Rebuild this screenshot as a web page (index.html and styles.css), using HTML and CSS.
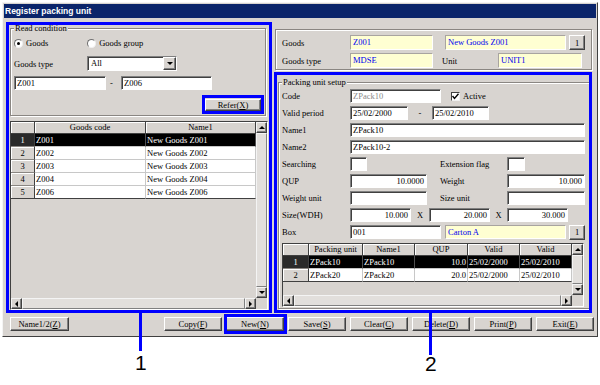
FILE: index.html
```html
<!DOCTYPE html>
<html lang="en">
<head>
    <meta charset="UTF-8">
    <meta name="viewport" content="width=device-width, initial-scale=1.0">
    <title>Register packing unit</title>
    <link rel="stylesheet" href="styles.css">
</head>
<body>
<div class="screen">
    <div class="window">
        <div class="titlebar">Register packing unit</div>

        <div class="main">
            <div class="col-left">
                <fieldset class="group read-cond">
                    <legend>Read condition</legend>
                    <div class="radio-row">
                        <label class="radio"><span class="radio-dot checked"></span>Goods</label>
                        <label class="radio radio-2"><span class="radio-dot"></span>Goods group</label>
                    </div>
                    <div class="type-row">
                        <span class="lbl lbl-type">Goods type</span>
                        <div class="select">
                            <span class="select-text">All</span>
                            <span class="drop"><i class="tri tri-down"></i></span>
                        </div>
                    </div>
                    <div class="range-row">
                        <div class="field w92">Z001</div>
                        <span class="dash">-</span>
                        <div class="field w91">Z006</div>
                    </div>
                    <div class="refer-row">
                        <button class="btn btn-refer">Refer(<u>X</u>)</button>
                    </div>
                </fieldset>

                <div class="grid goods-grid">
                    <div class="grid-body">
                        <div class="grid-table">
                            <div class="gh"></div><div class="gh">Goods code</div><div class="gh">Name1</div>
                            <div class="rh sel">1</div><div class="gc sel">Z001</div><div class="gc sel">New Goods Z001</div>
                            <div class="rh">2</div><div class="gc">Z002</div><div class="gc">New Goods Z002</div>
                            <div class="rh">3</div><div class="gc">Z003</div><div class="gc">New Goods Z003</div>
                            <div class="rh">4</div><div class="gc">Z004</div><div class="gc">New Goods Z004</div>
                            <div class="rh last">5</div><div class="gc last">Z006</div><div class="gc last">New Goods Z006</div>
                        </div>
                        <div class="vscroll">
                            <div class="sbtn"><i class="tri tri-up"></i></div>
                            <div class="thumb"></div>
                            <div class="sbtn"><i class="tri tri-down"></i></div>
                        </div>
                    </div>
                    <div class="hscroll">
                        <div class="sbtn"><i class="tri tri-left"></i></div>
                        <div class="thumb"></div>
                        <div class="sbtn"><i class="tri tri-right"></i></div>
                        <div class="scorner"></div>
                    </div>
                </div>
            </div>

            <div class="col-right">
                <fieldset class="group goods-group">
                    <div class="row">
                        <span class="lbl">Goods</span>
                        <div class="field yellow w83">Z001</div>
                        <div class="field yellow w121 ml12">New Goods Z001</div>
                        <button class="btn btn-small ml3">1</button>
                    </div>
                    <div class="row">
                        <span class="lbl">Goods type</span>
                        <div class="field yellow w83">MDSE</div>
                        <span class="lbl lbl-unit">Unit</span>
                        <div class="field yellow w84">UNIT1</div>
                    </div>
                </fieldset>

                <fieldset class="group packing">
                    <legend>Packing unit setup</legend>
                    <div class="rows">
                        <div class="row">
                            <span class="lbl">Code</span>
                            <div class="field w91 muted">ZPack10</div>
                            <span class="check">
                                <svg width="7" height="7" viewBox="0 0 7 7"><polyline points="0.5,3 2.5,5.5 6.5,0.8" fill="none" stroke="#000" stroke-width="1.4"/></svg>
                            </span>
                            <span class="check-text">Active</span>
                        </div>
                        <div class="row">
                            <span class="lbl">Valid period</span>
                            <div class="field w58">25/02/2000</div>
                            <span class="sep w24">-</span>
                            <div class="field w57">25/02/2010</div>
                        </div>
                        <div class="row">
                            <span class="lbl">Name1</span>
                            <div class="field w235">ZPack10</div>
                        </div>
                        <div class="row">
                            <span class="lbl">Name2</span>
                            <div class="field w235">ZPack10-2</div>
                        </div>
                        <div class="row">
                            <span class="lbl">Searching</span>
                            <div class="field w17"></div>
                            <span class="lbl lbl-2 ml73">Extension flag</span>
                            <div class="field w18"></div>
                        </div>
                        <div class="row">
                            <span class="lbl">QUP</span>
                            <div class="field num w77">10.0000</div>
                            <span class="lbl lbl-2 ml13">Weight</span>
                            <div class="field num w78">10.000</div>
                        </div>
                        <div class="row">
                            <span class="lbl">Weight unit</span>
                            <div class="field w77"></div>
                            <span class="lbl lbl-2 ml13">Size unit</span>
                            <div class="field w78"></div>
                        </div>
                        <div class="row">
                            <span class="lbl">Size(WDH)</span>
                            <div class="field num w61">10.000</div>
                            <span class="sep w18">X</span>
                            <div class="field num w61">20.000</div>
                            <span class="sep w17">X</span>
                            <div class="field num w61">30.000</div>
                        </div>
                        <div class="row">
                            <span class="lbl">Box</span>
                            <div class="field w91">001</div>
                            <div class="field yellow w121 ml4">Carton A</div>
                            <button class="btn btn-small ml3">1</button>
                        </div>
                    </div>

                    <div class="grid pack-grid">
                        <div class="grid-body">
                            <div class="grid-table">
                                <div class="gh"></div><div class="gh">Packing unit</div><div class="gh">Name1</div><div class="gh">QUP</div><div class="gh">Valid</div><div class="gh">Valid</div>
                                <div class="rh sel">1</div><div class="gc sel">ZPack10</div><div class="gc sel">ZPack10</div><div class="gc sel num">10.0</div><div class="gc sel">25/02/2000</div><div class="gc sel">25/02/2010</div>
                                <div class="rh last">2</div><div class="gc last">ZPack20</div><div class="gc last">ZPack20</div><div class="gc last num">20.0</div><div class="gc last">25/02/2000</div><div class="gc last">25/02/2010</div>
                            </div>
                            <div class="vscroll">
                                <div class="sbtn"><i class="tri tri-up"></i></div>
                                <div class="thumb"></div>
                                <div class="sbtn"><i class="tri tri-down"></i></div>
                            </div>
                        </div>
                        <div class="hscroll">
                            <div class="sbtn"><i class="tri tri-left"></i></div>
                            <div class="thumb"></div>
                            <div class="sbtn"><i class="tri tri-right"></i></div>
                            <div class="scorner"></div>
                        </div>
                    </div>
                </fieldset>
            </div>
        </div>

        <div class="footer">
            <button class="btn btn-foot btn-name">Name1/2(<u>Z</u>)</button>
            <div class="foot-actions">
                <button class="btn btn-foot">Copy(<u>F</u>)</button>
                <button class="btn btn-foot">New(<u>N</u>)</button>
                <button class="btn btn-foot">Save(<u>S</u>)</button>
                <button class="btn btn-foot">Clear(<u>C</u>)</button>
                <button class="btn btn-foot">Delete(<u>D</u>)</button>
                <button class="btn btn-foot">Print(<u>P</u>)</button>
                <button class="btn btn-foot">Exit(<u>E</u>)</button>
            </div>
        </div>
    </div>

    <!-- callout marks drawn over the dialog -->
    <div class="mark mark-left"></div>
    <div class="mark mark-right"></div>
    <div class="mark mark-refer"></div>
    <div class="mark mark-new"></div>
    <div class="leader leader-1"></div>
    <div class="leader leader-2"></div>
    <div class="callout callout-1">1</div>
    <div class="callout callout-2">2</div>
</div>
</body>
</html>
```

FILE: styles.css
```css
* {
    box-sizing: border-box;
}

body {
    margin: 0;
    background: #fff;
    font-family: "Liberation Serif", serif;
    font-size: 8.5px;
    color: #000;
}

.screen {
    position: relative;
    width: 600px;
    height: 385px;
    overflow: hidden;
}

.window {
    margin: 2px 0 0 2px;
    width: 596px;
    height: 335px;
    padding: 1px;
    border: 1px solid;
    border-color: #f4f4f4 #404040 #404040 #f4f4f4;
    background: #d8d4d0;
    display: flex;
    flex-direction: column;
}

.titlebar {
    flex: none;
    height: 14px;
    padding-left: 1px;
    background: #0a246a;
    color: #fff;
    font: bold 8.5px "Liberation Sans", sans-serif;
    line-height: 14px;
}

.main {
    flex: none;
    height: 294px;
    display: flex;
    gap: 7px;
    padding: 5px 4px 0 6px;
}

.col-left {
    width: 258px;
    display: flex;
    flex-direction: column;
}

.col-right {
    width: 317px;
    display: flex;
    flex-direction: column;
}

/* group boxes */
.group {
    margin: 0;
    min-width: 0;
    padding: 0 3px;
    border: 1px solid #8a8682;
    box-shadow: inset 1px 1px 0 #fff, 1px 1px 0 #fff;
}

.group legend {
    padding: 0 1px;
    line-height: 10px;
    background: #d8d4d0;
}

.read-cond {
    width: 256px;
    padding: 4px 3px 4px;
}

.goods-group {
    margin-top: 6px;
    padding: 5px 6px 1px;
    display: flex;
    flex-direction: column;
    gap: 3px;
}

.goods-group .row {
    height: 15px;
}

.packing {
    margin: 7px 0 0 3px;
    width: 312px;
    padding: 2px 3px 1px;
}

.rows {
    display: flex;
    flex-direction: column;
    gap: 3px;
}

.row {
    display: flex;
    align-items: center;
    height: 14px;
}

.lbl {
    width: 68px;
    flex: none;
    white-space: nowrap;
}

.lbl-2 {
    width: 67px;
}

.lbl-unit {
    width: 56px;
    margin-left: 9px;
}

.lbl-type {
    width: 73px;
}

/* read condition */
.radio-row {
    height: 12px;
    display: flex;
    align-items: center;
}

.radio {
    display: flex;
    align-items: center;
    gap: 3px;
}

.radio-2 {
    margin-left: 39px;
}

.radio-dot {
    position: relative;
    width: 9px;
    height: 9px;
    border-radius: 50%;
    background: #fff;
    border: 1px solid;
    border-color: #707070 #f0f0f0 #f0f0f0 #707070;
}

.radio-dot.checked::after {
    content: "";
    position: absolute;
    left: 2px;
    top: 2px;
    width: 3px;
    height: 3px;
    border-radius: 50%;
    background: #000;
}

.type-row {
    margin-top: 7px;
    height: 15px;
    display: flex;
    align-items: center;
}

.select {
    width: 90px;
    height: 15px;
    display: flex;
    background: #fff;
    border: 1px solid;
    border-color: #808080 #fff #fff #808080;
    box-shadow: inset 1px 1px 0 #404040;
}

.select-text {
    flex: 1;
    padding: 1px 0 0 3px;
    line-height: 11px;
}

.drop {
    width: 13px;
    display: flex;
    align-items: center;
    justify-content: center;
    background: #d8d4d0;
    border: 1px solid;
    border-color: #fff #404040 #404040 #fff;
    box-shadow: inset -1px -1px 0 #808080;
}

.range-row {
    margin-top: 5px;
    height: 14px;
    display: flex;
    align-items: center;
}

.dash {
    width: 15px;
    padding-left: 4px;
}

.refer-row {
    margin-top: 9px;
    display: flex;
    justify-content: flex-end;
    padding-right: 1px;
}

/* inputs */
.field {
    flex: none;
    height: 14px;
    padding: 0 2px;
    background: #fff;
    border: 1px solid;
    border-color: #808080 #fff #fff #808080;
    box-shadow: inset 1px 1px 0 #404040;
    line-height: 12px;
    white-space: nowrap;
    overflow: hidden;
}

.goods-group .field {
    height: 15px;
    line-height: 13px;
}

.field.yellow {
    background: #ffffd2;
    color: #0000f0;
    border-color: #a8a4a0 #fff #fff #a8a4a0;
    box-shadow: none;
}

.field.muted {
    color: #8a8a8a;
}

.num {
    text-align: right;
}

.sep {
    flex: none;
    text-align: center;
}

.check {
    margin-left: 10px;
    width: 9px;
    height: 9px;
    display: flex;
    align-items: center;
    justify-content: center;
    background: #fff;
    border: 1px solid;
    border-color: #404040 #f0f0f0 #f0f0f0 #404040;
}

.check-text {
    margin-left: 3px;
}

.w17 { width: 17px; }
.w18 { width: 18px; }
.w24 { width: 24px; }
.w57 { width: 57px; }
.w58 { width: 58px; }
.w61 { width: 61px; }
.w77 { width: 77px; }
.w78 { width: 78px; }
.w83 { width: 83px; }
.w84 { width: 84px; }
.w91 { width: 91px; }
.w92 { width: 92px; }
.w121 { width: 121px; }
.w235 { width: 235px; }
.ml3 { margin-left: 3px; }
.ml4 { margin-left: 4px; }
.ml12 { margin-left: 12px; }
.ml13 { margin-left: 13px; }
.ml73 { margin-left: 73px; }

/* buttons */
.btn {
    height: 14px;
    padding: 0;
    font: inherit;
    color: #000;
    line-height: 12px;
    text-align: center;
    background: #d8d4d0;
    border: 1px solid;
    border-color: #fff #404040 #404040 #fff;
    box-shadow: inset -1px -1px 0 #808080;
    white-space: nowrap;
}

.btn-refer {
    width: 56px;
    height: 12px;
    line-height: 10px;
}

.btn-small {
    width: 16px;
    height: 15px;
    flex: none;
}

.footer {
    display: flex;
    justify-content: space-between;
    padding: 5px 2px 0 6px;
}

.foot-actions {
    display: flex;
    gap: 4px;
}

.btn-foot {
    width: 58px;
}

.btn-name {
    width: 59px;
}

/* grids */
.grid {
    display: flex;
    flex-direction: column;
    background: #d8d4d0;
    border: 1px solid;
    border-color: #404040 #fff #fff #404040;
}

.goods-grid {
    margin-top: 5px;
    height: 189px;
}

.pack-grid {
    margin-top: 4px;
    width: 302px;
    height: 64px;
}

.grid-body {
    flex: 1;
    display: flex;
    min-height: 0;
}

.grid-table {
    flex: 1;
    display: grid;
    grid-template-rows: 12px;
    grid-auto-rows: 13px;
    align-content: start;
}

.goods-grid .grid-table {
    grid-template-columns: 24px 111px 110px;
}

.pack-grid .grid-table {
    grid-template-columns: 26px 54px 52px 53px 52px 52px;
}

.gh {
    text-align: center;
    line-height: 11px;
    border-right: 1px solid #404040;
    border-bottom: 1px solid #404040;
    box-shadow: inset 1px 1px 0 #fff;
    white-space: nowrap;
    overflow: hidden;
}

.rh {
    text-align: center;
    line-height: 12px;
    border-right: 1px solid #404040;
    border-bottom: 1px solid #8a8682;
    box-shadow: inset 1px 1px 0 #fff;
}

.rh.sel {
    background: #2a2a2a;
    color: #fff;
    box-shadow: none;
}

.gc {
    padding-left: 1px;
    line-height: 12px;
    background: #fff;
    border-right: 1px solid #c8c8c8;
    border-bottom: 1px solid #c8c8c8;
    white-space: nowrap;
    overflow: hidden;
}

.gc.num {
    padding: 0 1px 0 0;
    text-align: right;
}

.gc.sel {
    background: #000;
    color: #fff;
    border-right-color: #505050;
}

.last {
    border-bottom-color: #404040;
}

.vscroll {
    width: 11px;
    display: flex;
    flex-direction: column;
}

.hscroll {
    height: 11px;
    flex: none;
    display: flex;
}

.sbtn {
    width: 11px;
    height: 11px;
    flex: none;
    display: flex;
    align-items: center;
    justify-content: center;
    background: #d8d4d0;
    border: 1px solid;
    border-color: #f4f4f4 #404040 #404040 #f4f4f4;
    box-shadow: inset -1px -1px 0 #808080;
}

.thumb {
    flex: 1;
    background: #e2dfdc;
    border: 1px solid;
    border-color: #f4f4f4 #808080 #808080 #f4f4f4;
}

.scorner {
    width: 11px;
    flex: none;
    background: #d8d4d0;
}

.tri {
    width: 0;
    height: 0;
    border: 3px solid transparent;
}

.tri-up { border-bottom-color: #000; border-top-width: 0; }
.tri-down { border-top-color: #000; border-bottom-width: 0; }
.tri-left { border-right-color: #000; border-left-width: 0; }
.tri-right { border-left-color: #000; border-right-width: 0; }

/* callouts */
.mark {
    position: absolute;
    border: 3px solid #0000ff;
}

.mark-left {
    left: 6px;
    top: 22px;
    width: 266px;
    height: 291px;
}

.mark-right {
    left: 274px;
    top: 72px;
    width: 318px;
    height: 241px;
}

.mark-refer {
    left: 202px;
    top: 95px;
    width: 62px;
    height: 19px;
}

.mark-new {
    left: 224px;
    top: 314px;
    width: 63px;
    height: 20px;
}

.leader {
    position: absolute;
    width: 3px;
    background: #0000ff;
}

.leader-1 {
    left: 139px;
    top: 313px;
    height: 38px;
}

.leader-2 {
    left: 429px;
    top: 313px;
    height: 42px;
}

.callout {
    position: absolute;
    font: 21px "Liberation Sans", sans-serif;
    line-height: 21px;
}

.callout-1 {
    left: 135px;
    top: 352px;
}

.callout-2 {
    left: 425px;
    top: 353px;
}
```
